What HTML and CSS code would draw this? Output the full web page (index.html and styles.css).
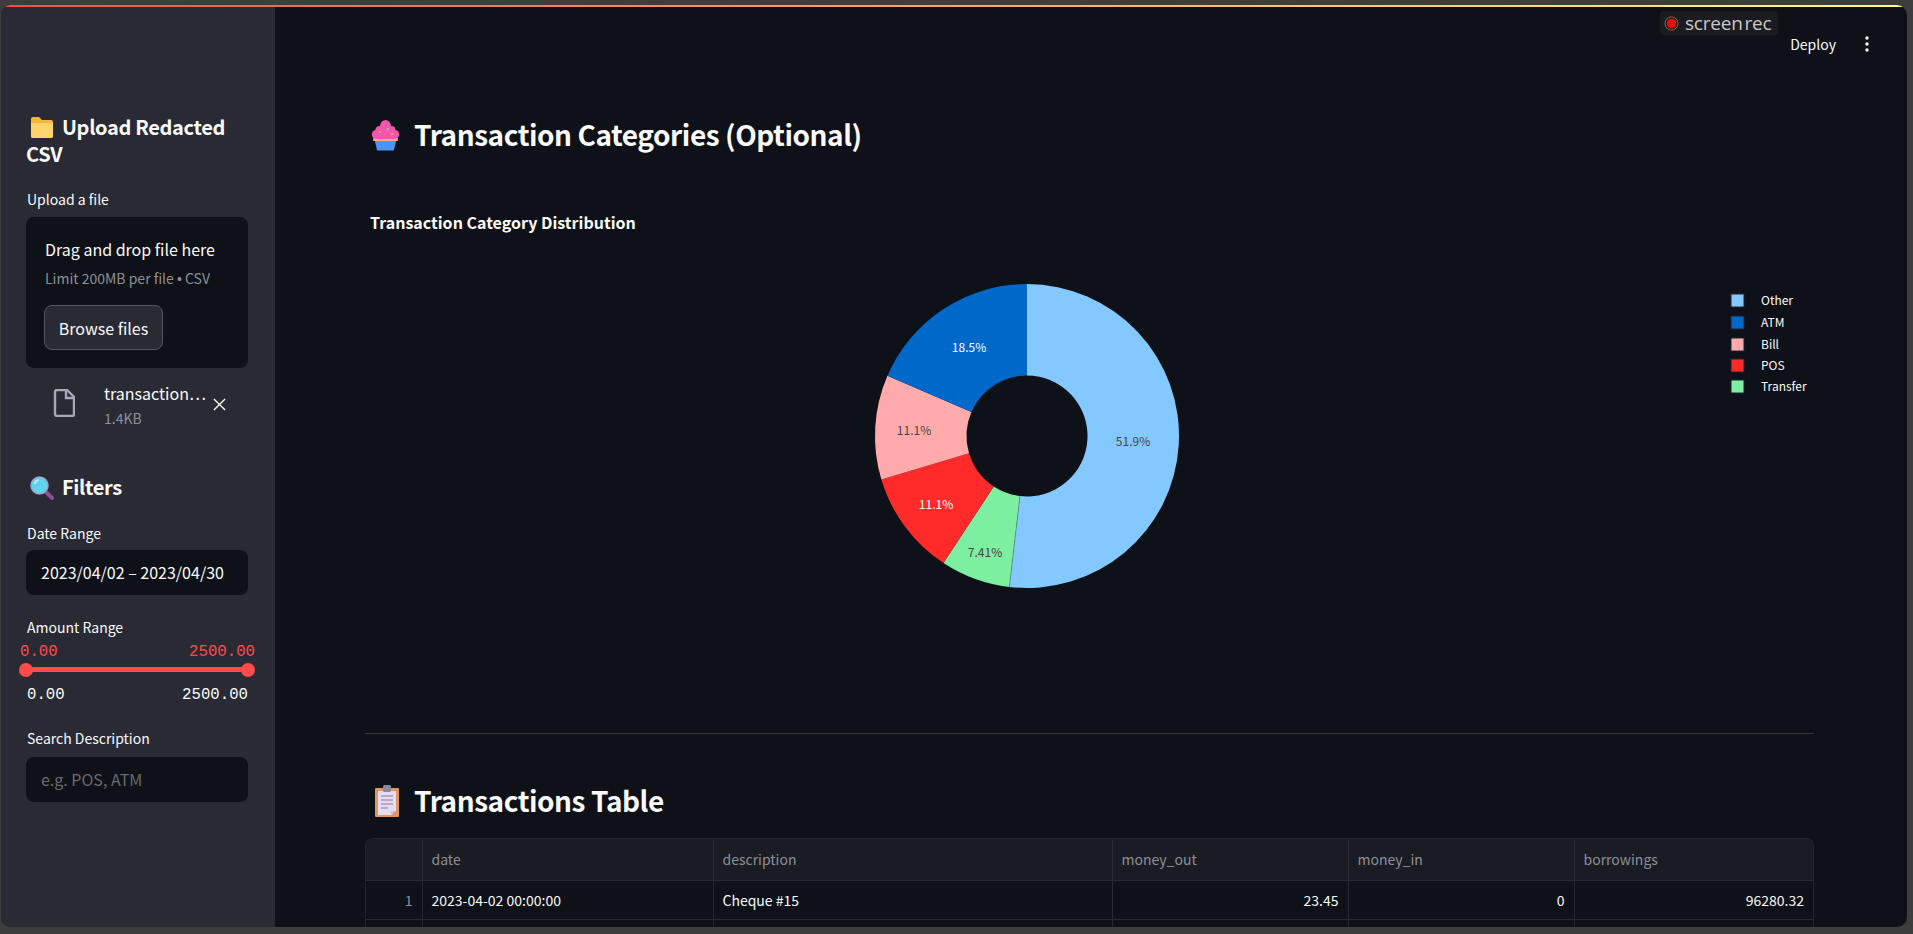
FILE: index.html
```html
<!DOCTYPE html>
<html lang="en">
<head>
  <meta charset="UTF-8" />
  <title>Transactions</title>
  <link rel="stylesheet" href="styles.css">
</head>
<body>
  <div class="app">
    <div class="decoration"></div>

    <aside class="sidebar">
      <h3 class="side-title">
        <svg class="emoji folder-emoji" viewBox="0 0 24 22"><path d="M1 3q0-2 2-2h6l3 3h9q2 0 2 2v14q0 2-2 2H3q-2 0-2-2z" fill="#f5b53d"/><path d="M1 7h22v13q0 2-2 2H3q-2 0-2-2z" fill="#ffd56b"/></svg>Upload Redacted CSV
      </h3>

      <div class="label label-upload">Upload a file</div>
      <div class="dropzone">
        <div class="drop-main">Drag and drop file here</div>
        <div class="drop-sub">Limit 200MB per file <span class="dot">•</span> CSV</div>
        <button class="browse">Browse files</button>
      </div>

      <div class="file-row">
        <svg class="file-icon" viewBox="0 0 22 28"><path d="M2 3q0-2 2-2h10l7 7v17q0 2-2 2H4q-2 0-2-2z" fill="none" stroke="#a3a8b8" stroke-width="2.4"/><path d="M13 1v8h8" fill="none" stroke="#a3a8b8" stroke-width="2.4"/></svg>
        <div class="file-text">
          <div class="file-name">transaction…</div>
          <div class="file-size">1.4KB</div>
        </div>
        <svg class="file-close" viewBox="0 0 14 14"><path d="M1 1l12 12M13 1L1 13" stroke="#fafafa" stroke-width="1.5"/></svg>
      </div>

      <h3 class="side-title filters-title">
        <svg class="emoji" viewBox="0 0 24 24"><path d="M15 15l7 7" stroke="#8a4f96" stroke-width="4" stroke-linecap="round"/><circle cx="9.5" cy="9.5" r="8.5" fill="#62d3ee" stroke="#9aa7c8" stroke-width="1.5"/><path d="M4.5 8a5.500 5.500 0 0 1 4-4" stroke="#c8f2fb" stroke-width="1.600" fill="none"/></svg>Filters
      </h3>

      <div class="label label-date">Date Range</div>
      <div class="field">2023/04/02 – 2023/04/30</div>

      <div class="label label-amount">Amount Range</div>
      <div class="slider-values"><span>0.00</span><span>2500.00</span></div>
      <div class="slider"><span class="thumb"></span><span class="thumb"></span></div>
      <div class="slider-ends"><span>0.00</span><span>2500.00</span></div>

      <div class="label label-search">Search Description</div>
      <div class="field placeholder">e.g. POS, ATM</div>
    </aside>

    <main class="main">
      <div class="topbar">
        <span class="deploy">Deploy</span>
        <svg class="menu-dots" viewBox="0 0 4 16"><circle cx="2" cy="2" r="1.700"/><circle cx="2" cy="8" r="1.700"/><circle cx="2" cy="14" r="1.700"/></svg>
      </div>

      <h2 class="section-title">
        <svg class="emoji-lg" viewBox="0 0 26 32" preserveAspectRatio="none"><path d="M3 20h20l-2.500 11.500h-15z" fill="#4d94f5"/><path d="M2 19h22v3H2z" fill="#f7b27c"/><path d="M1 17q-1-5 3-6 0-4 4-4 1-6 5-6t5 6q4 0 4 4 4 1 3 6-1 3-4 3H5q-3 0-4-3z" fill="#f257ad"/><circle cx="8" cy="13" r="1" fill="#ffc44d"/><circle cx="15" cy="10" r="1" fill="#6fd3f5"/><circle cx="19" cy="15" r="1" fill="#ffc44d"/></svg>Transaction Categories (Optional)
      </h2>

      <svg class="chart" viewBox="0 0 1450 500">
        <text class="chart-title" x="5" y="28.500">Transaction Category Distribution</text>

        <g transform="translate(662 236)">
          <path fill="#83c9ff" d="M0-152A152 152 0 1 1-17.650 150.970L-7.020 60.090A60.500 60.500 0 1 0 0-60.500Z"/>
          <path fill="#7defa1" d="M-17.650 150.970A152 152 0 0 1-83.520 126.990L-33.240 50.550A60.500 60.500 0 0 0-7.020 60.090Z"/>
          <path fill="#ff2b2b" d="M-83.520 126.990A152 152 0 0 1-145.620 43.590L-57.960 17.350A60.500 60.500 0 0 0-33.240 50.550Z"/>
          <path fill="#ffabab" d="M-145.620 43.590A152 152 0 0 1-139.570-60.210L-55.550-23.960A60.500 60.500 0 0 0-57.960 17.350Z"/>
          <path fill="#0068c9" d="M-139.570-60.210A152 152 0 0 1 0-152L0-60.500A60.500 60.500 0 0 0-55.550-23.960Z"/>
        </g>
        <path d="M644.350 386.970L654.980 296.090" stroke="#4f7f7a" stroke-width="0.6"/>
        <g class="slice-labels" transform="translate(662 236)">
          <text class="dark" x="106" y="10">51.9%</text>
          <text class="dark" x="-42" y="121">7.41%</text>
          <text class="light" x="-91" y="73">11.1%</text>
          <text class="dark" x="-113" y="-1">11.1%</text>
          <text class="light" x="-58" y="-84">18.5%</text>
        </g>

        <g class="legend">
          <rect x="1366" y="94" width="13" height="13" fill="#83c9ff"/><text x="1396" y="105">Other</text>
          <rect x="1366" y="116" width="13" height="13" fill="#0068c9"/><text x="1396" y="127">ATM</text>
          <rect x="1366" y="138" width="13" height="13" fill="#ffabab"/><text x="1396" y="149">Bill</text>
          <rect x="1366" y="159" width="13" height="13" fill="#ff2b2b"/><text x="1396" y="170">POS</text>
          <rect x="1366" y="180" width="13" height="13" fill="#7defa1"/><text x="1396" y="191">Transfer</text>
        </g>
      </svg>

      <hr class="divider">

      <h2 class="section-title table-title">
        <svg class="emoji-lg clip-emoji" viewBox="0 0 26 32"><rect x="1" y="3" width="24" height="29" rx="1" fill="#e0965c"/><path d="M4 6h18v20l-5 4H4z" fill="#e4dcf2"/><path d="M17 30l5-4h-5z" fill="#c9bedd"/><rect x="9" y="0" width="8" height="7" rx="1.500" fill="#8c8794"/><path d="M7 11h12M7 15h12M7 19h12M7 23h7" stroke="#a49db5" stroke-width="1.500"/></svg>Transactions Table
      </h2>

      <div class="table-wrap">
        <table class="data-table">
          <colgroup>
            <col class="col-index"><col class="col-date"><col class="col-desc"><col class="col-out"><col class="col-in"><col>
          </colgroup>
          <thead>
            <tr><th></th><th>date</th><th>description</th><th>money_out</th><th>money_in</th><th>borrowings</th></tr>
          </thead>
          <tbody>
            <tr><td class="idx">1</td><td>2023-04-02 00:00:00</td><td>Cheque #15</td><td class="num">23.45</td><td class="num">0</td><td class="num">96280.32</td></tr>
            <tr><td class="idx">&nbsp;</td><td></td><td></td><td></td><td></td><td></td></tr>
          </tbody>
        </table>
      </div>
    </main>

    <div class="screenrec">
      <svg class="rec-dot" viewBox="0 0 16 16"><circle cx="8" cy="8" r="7" fill="none" stroke="#e0413f" stroke-width="1"/><circle cx="8" cy="8" r="5" fill="#ff0000"/></svg>
      <span>screen rec</span>
    </div>
  </div>
</body>
</html>
```

FILE: styles.css
```css
* {
  box-sizing: border-box;
}

html, body {
  margin: 0;
  height: 934px;
  overflow: hidden;
}

body {
  background-color: #3d3d3d;
  padding: 5px 6px 7px 1px;
  font-family: "Noto Sans CJK SC", "Source Sans Pro", "Noto Sans", sans-serif;
  color: #fafafa;
  font-size: 14px;
}

.app {
  position: relative;
  display: flex;
  height: 922px;
  background-color: #0e1117;
  border-radius: 10px;
  overflow: hidden;
}

.decoration {
  position: absolute;
  top: 0;
  left: 0;
  right: 0;
  height: 2px;
  background: linear-gradient(90deg, #ff4b4b, #fffd80);
}

/* sidebar */
.sidebar {
  width: 274px;
  flex-shrink: 0;
  background-color: #292a33;
  padding: 108px 27px 0 25px;
}

.side-title {
  margin: 0;
  font-size: 20px;
  font-weight: 600;
  line-height: 27px;
  letter-spacing: -0.35px;
}

.emoji {
  width: 24px;
  height: 24px;
  margin: 0 8px 0 4px;
  vertical-align: -5px;
}

.folder-emoji {
  height: 22px;
  vertical-align: -3px;
}

.label {
  font-size: 14px;
  line-height: 20px;
  padding-left: 1px;
  margin-bottom: 7px;
}

.label-upload {
  margin-top: 22px;
  margin-bottom: 8px;
}

.dropzone {
  height: 151px;
  background-color: #0e1117;
  border-radius: 8px;
  padding: 21px 18px;
}

.drop-main {
  font-size: 16px;
  line-height: 22px;
  padding-left: 1px;
}

.drop-sub {
  font-size: 14px;
  line-height: 20px;
  margin-top: 8px;
  padding-left: 1px;
  color: #8f9096;
}

.dot {
  font-family: "Liberation Sans", sans-serif;
}

.browse {
  display: block;
  width: 119px;
  height: 45px;
  margin-top: 16px;
  background-color: #292a33;
  border: 1px solid #55565e;
  border-radius: 8px;
  color: #fafafa;
  font-family: inherit;
  font-size: 16px;
  padding: 0;
}

.file-row {
  display: flex;
  align-items: center;
  height: 60px;
  margin-top: 5px;
  padding-left: 27px;
}

.file-icon {
  width: 22px;
  height: 28px;
}

.file-text {
  margin-left: 29px;
  margin-top: 3px;
  width: 103px;
}

.file-name {
  font-size: 16px;
  line-height: 26px;
}

.file-size {
  font-size: 14px;
  line-height: 24px;
  color: #8f9096;
}

.file-close {
  width: 13px;
  height: 13px;
  margin-top: 2px;
  margin-left: 6px;
}

.filters-title {
  margin-top: 40px;
}

.label-date {
  margin-top: 23px;
}

.field {
  height: 45px;
  background-color: #0e1117;
  border-radius: 8px;
  padding-left: 15px;
  font-size: 16px;
  line-height: 45px;
}

.placeholder {
  color: #696a70;
}

.label-amount {
  margin-top: 22px;
  margin-bottom: 5px;
}

.slider-values,
.slider-ends {
  display: flex;
  justify-content: space-between;
  font-family: "Liberation Mono", "DejaVu Sans Mono", monospace;
  font-size: 15.7px;
  line-height: 20px;
}

.slider-values {
  color: #ff4b4b;
  margin: 0 -7px 0 -6px;
}

.slider-ends {
  margin-top: 13px;
  padding-left: 1px;
}

.slider {
  display: flex;
  justify-content: space-between;
  align-items: center;
  height: 5px;
  margin-top: 5px;
  background-color: #ff4b4b;
}

.thumb {
  width: 14px;
  height: 14px;
  margin: 0 -7px;
  border-radius: 50%;
  background-color: #ff4b4b;
}

.label-search {
  margin-top: 23px;
  margin-bottom: 9px;
}

/* main area */
.main {
  flex: 1;
  min-width: 0;
  padding: 0 93px 0 90px;
  overflow: hidden;
}

.topbar {
  display: flex;
  justify-content: flex-end;
  align-items: center;
  height: 107px;
  padding: 0 0 30px;
  margin-right: -55px;
}

.deploy {
  font-size: 14px;
  line-height: 20px;
  margin-right: 29px;
}

.menu-dots {
  width: 4px;
  height: 16px;
  fill: #fafafa;
}

.section-title {
  margin: 0;
  padding-left: 6px;
  font-size: 28px;
  font-weight: 600;
  line-height: 44px;
  letter-spacing: -0.45px;
}

.emoji-lg {
  width: 29px;
  height: 32px;
  margin-right: 14px;
  vertical-align: -5px;
}

.clip-emoji {
  width: 26px;
  margin-left: 3px;
  margin-right: 14px;
}

.chart {
  display: block;
  width: 1450px;
  height: 500px;
  margin-top: 44px;
}

.chart-title {
  font-size: 16px;
  font-weight: 700;
  fill: #fafafa;
}

.slice-labels text {
  font-size: 12px;
  text-anchor: middle;
}

.slice-labels .dark {
  fill: #444;
}

.slice-labels .light {
  fill: #fff;
}

.legend text {
  font-size: 12px;
  fill: #fafafa;
}

.legend rect {
  stroke: #1f2229;
  stroke-width: 1;
}

.divider {
  margin: 33px 0 0;
  border: none;
  border-top: 1px solid #34363c;
}

.table-title {
  margin-top: 44px;
}

/* data table */
.table-wrap {
  margin-top: 16px;
  border: 1px solid #24262d;
  border-bottom: none;
  border-radius: 8px 8px 0 0;
  overflow: hidden;
}

.data-table {
  width: 100%;
  table-layout: fixed;
  border-collapse: collapse;
  font-size: 14px;
}

.col-index { width: 56px; }
.col-date { width: 291px; }
.col-desc { width: 399px; }
.col-out { width: 236px; }
.col-in { width: 226px; }

.data-table th,
.data-table td {
  border-right: 1px solid #282a31;
  border-bottom: 1px solid #282a31;
  padding: 0 9px;
  font-weight: 400;
  text-align: left;
}

.data-table th:last-child,
.data-table td:last-child {
  border-right: none;
}

.data-table th {
  height: 41px;
  background-color: #1a1c24;
  color: #8e8f94;
}

.data-table td {
  height: 39px;
}

.data-table .num,
.data-table .idx {
  text-align: right;
}

.data-table .idx {
  color: #8e8f94;
}

/* recorder watermark sits over the page */
.screenrec {
  position: absolute;
  top: 6px;
  left: 1659px;
  display: flex;
  align-items: center;
  width: 118px;
  height: 24px;
  padding-left: 4px;
  background-color: #1b1c1f;
  border-radius: 4px;
  color: #c9c9c9;
  font-family: "Open Sans", sans-serif;
  font-size: 19px;
  letter-spacing: -0.2px;
  word-spacing: -3px;
}

.rec-dot {
  width: 15px;
  height: 15px;
  margin-right: 6px;
}
```
